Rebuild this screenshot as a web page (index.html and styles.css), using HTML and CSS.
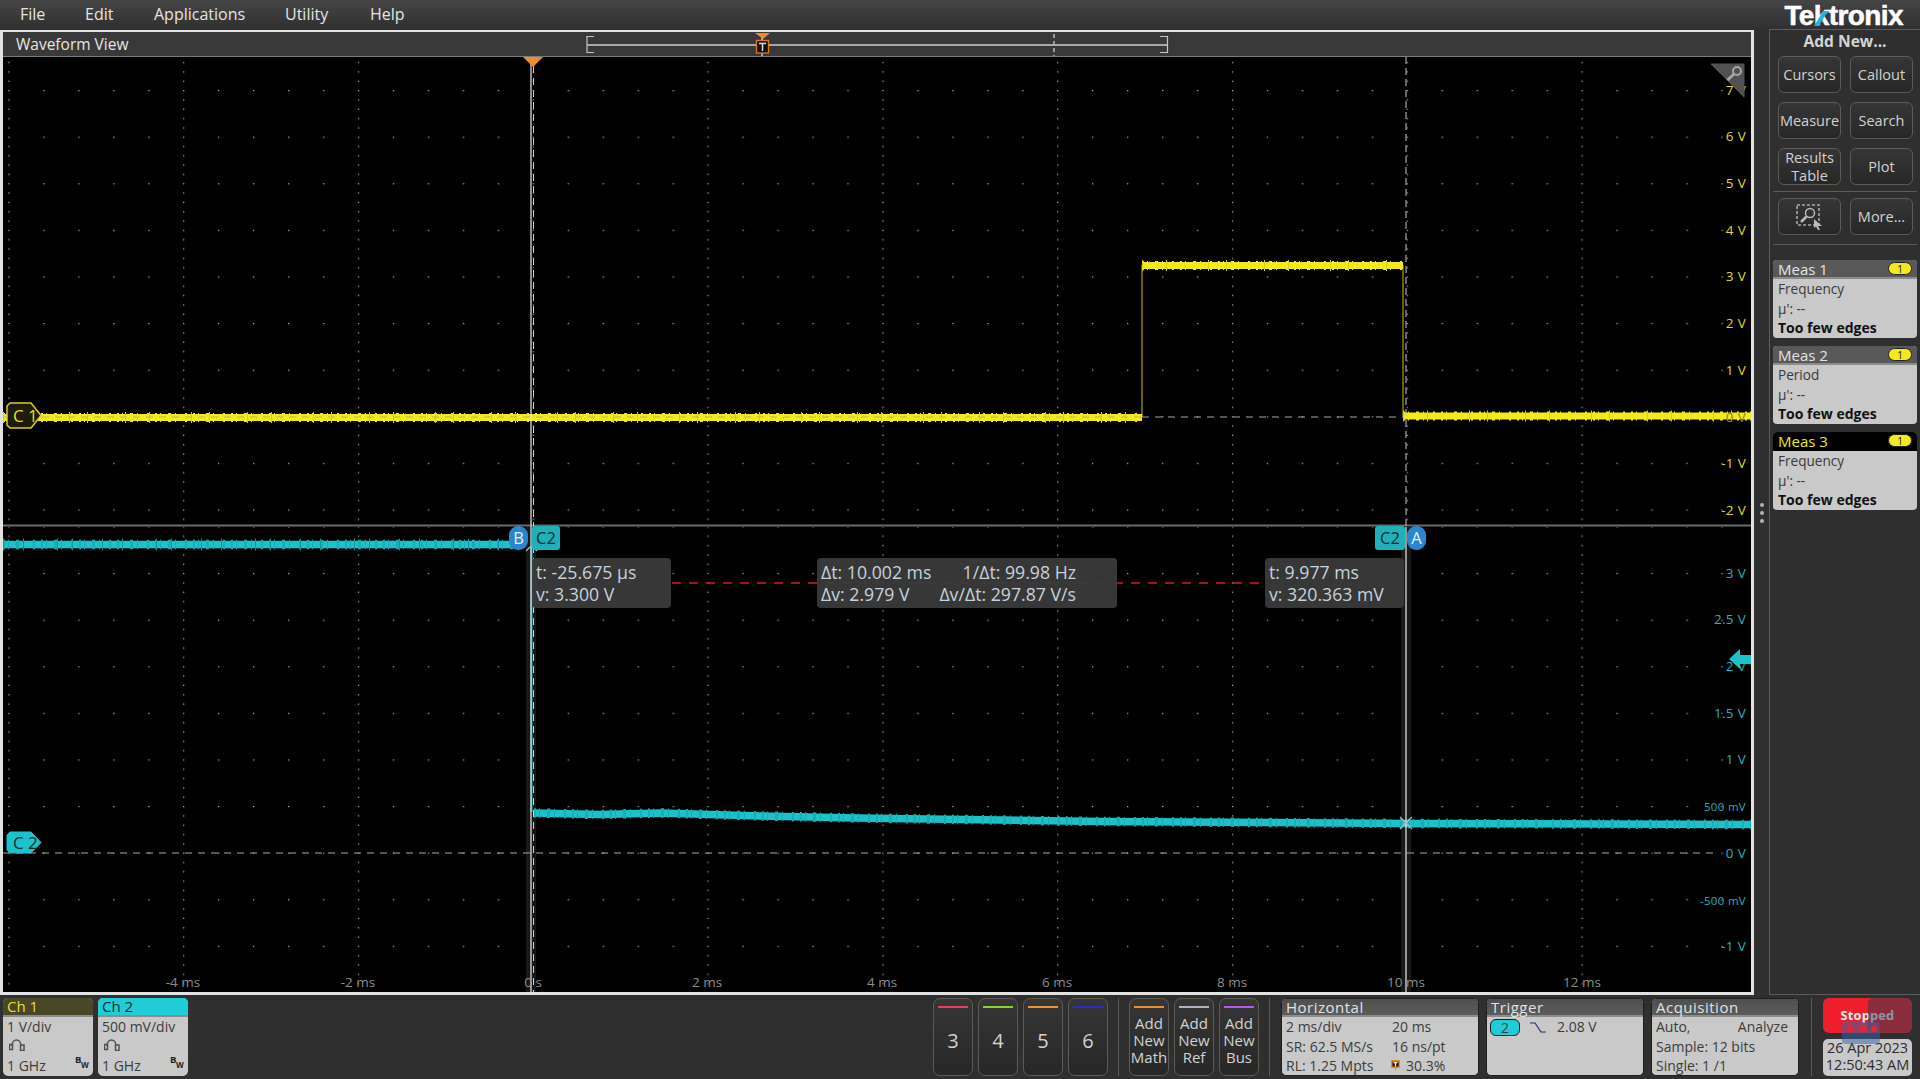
FILE: index.html
```html
<!DOCTYPE html>
<html lang="en">
<head>
<meta charset="utf-8">
<title>Waveform View</title>
<link rel="stylesheet" href="styles.css">
</head>
<body>
<div class="app">
  <header class="menubar">
    <nav class="menu">
      <span class="m-file">File</span><span class="m-edit">Edit</span><span class="m-apps">Applications</span><span class="m-util">Utility</span><span>Help</span>
    </nav>
    <div class="logo">Tektronix<svg class="logo-k" viewBox="0 0 16 16"><polygon points="0,16 5,16 15,0 10,0"/></svg></div>
  </header>

  <main class="main">
    <section class="wave">
      <div class="wave-head">
        <span class="wave-title">Waveform View</span>
        <svg class="overview" viewBox="580 32 600 24">
          <path class="ov-line" d="M587 45H1167"/>
          <path class="ov-br" d="M594 36.5H587V52.5H594M1160 36.5H1167.5V52.5H1160"/>
          <path class="ov-dash" d="M1054 34V56"/>
          <path class="ov-line" d="M762 38V56"/>
          <polygon class="ov-tri" points="755,33 770,33 763,39"/>
          <rect class="ov-box" x="756.5" y="40.5" width="12" height="12.5"/>
          <path class="ov-t" d="M759 43.5H766M762.5 43.5V51"/>
        </svg>
      </div>
      <div class="plot">
        <svg class="scope" viewBox="3 57 1748 935">
          <defs>
            <pattern id="gridA" x="8.3" y="43.4" width="174.8" height="46.6" patternUnits="userSpaceOnUse">
              <rect class="dot" x="0" y="0" width="1.2" height="1.2"/><rect class="dot" x="35" y="0" width="1.2" height="1.2"/><rect class="dot" x="70" y="0" width="1.2" height="1.2"/><rect class="dot" x="105" y="0" width="1.2" height="1.2"/><rect class="dot" x="140" y="0" width="1.2" height="1.2"/>
              <rect class="dot" x="0" y="9.3" width="1.2" height="1.2"/><rect class="dot" x="0" y="18.6" width="1.2" height="1.2"/><rect class="dot" x="0" y="28" width="1.2" height="1.2"/><rect class="dot" x="0" y="37.3" width="1.2" height="1.2"/>
            </pattern>
            <pattern id="gridB" x="8.3" y="526.4" width="174.8" height="46.6" patternUnits="userSpaceOnUse">
              <rect class="dot" x="0" y="0" width="1.2" height="1.2"/><rect class="dot" x="35" y="0" width="1.2" height="1.2"/><rect class="dot" x="70" y="0" width="1.2" height="1.2"/><rect class="dot" x="105" y="0" width="1.2" height="1.2"/><rect class="dot" x="140" y="0" width="1.2" height="1.2"/>
              <rect class="dot" x="0" y="9.3" width="1.2" height="1.2"/><rect class="dot" x="0" y="18.6" width="1.2" height="1.2"/><rect class="dot" x="0" y="28" width="1.2" height="1.2"/><rect class="dot" x="0" y="37.3" width="1.2" height="1.2"/>
            </pattern>
          </defs>
          <rect x="3" y="57" width="1748" height="468" fill="url(#gridA)"/>
          <rect x="3" y="527" width="1748" height="465" fill="url(#gridB)"/>

          <rect class="band" x="526" y="527" width="10" height="465"/>
          <rect class="band" x="1401" y="527" width="10" height="465"/>

          <!-- zero reference lines -->
          <path class="zero" d="M1142 417H1403"/>
          <path class="zero" d="M3 853H1715"/>

          <!-- channel 1 -->
          <path class="y-edge" d="M1142 417V265M1403 265V416"/>
          <path class="y-main" d="M3 417.5H1142M1142 265.500H1403M1403 416H1751"/>
          <path class="y-fuzz1" d="M3 417.5H1142M1142 265.500H1403M1403 416H1751"/>
          <path class="y-fuzz2" d="M3 417.5H1142M1142 265.500H1403M1403 416H1751"/>
          <path class="zero zero-over" d="M3 417H1142"/>

          <!-- channel 2 -->
          <path class="c-edge" d="M531.500 546V812"/>
          <path class="c-main" d="M3 544.5H520"/>
          <path class="c-fuzz1" d="M3 544.5H520"/>
          <path class="c-fuzz2" d="M3 544.5H520"/>
          <path class="c-main" d="M534 813L600 814.5L661 813L760 816L857 818L1102 821.5L1406 823.500L1751 824.500"/>
          <path class="c-fuzz1" d="M534 813L600 814.5L661 813L760 816L857 818L1102 821.5L1406 823.500L1751 824.500"/>

          <!-- pane separator -->
          <path class="sep" d="M3 525.5H1751"/>

          <!-- measurement line -->
          <path class="deltaline" d="M672 583H1264"/>

          <!-- cursors -->
          <path class="trig-dash" d="M533.5 66V992"/>
          <path class="cursor" d="M531 57V992M1406 527V992"/>
          <path class="cursor-top" d="M1406 57V527"/>
          <path class="cross" d="M1400 817L1412 829M1412 817L1400 829"/>
          <path class="cross" d="M526 551L530 547M537 551L533 547"/>
          <polygon class="trig-mark" points="523,57 543,57 533,67"/>

          <!-- vertical scale -->
          <g class="vy">
            <text x="1746" y="95">7 V</text><text x="1746" y="141">6 V</text><text x="1746" y="188">5 V</text><text x="1746" y="235">4 V</text><text x="1746" y="281">3 V</text><text x="1746" y="328">2 V</text><text x="1746" y="375">1 V</text><text class="on-trace" x="1746" y="422">0 V</text><text x="1746" y="468">-1 V</text><text x="1746" y="515">-2 V</text>
          </g>
          <g class="vc">
            <text x="1746" y="578">3 V</text><text x="1746" y="624">2.5 V</text><text x="1746" y="671">2 V</text><text x="1746" y="718">1.5 V</text><text x="1746" y="764">1 V</text><text class="small" x="1746" y="811">500 mV</text><text x="1746" y="858">0 V</text><text class="small" x="1746" y="905">-500 mV</text><text x="1746" y="951">-1 V</text>
          </g>
          <!-- time scale -->
          <g class="vt">
            <text x="183" y="987">-4 ms</text><text x="358" y="987">-2 ms</text><text x="533" y="987">0 s</text><text x="707" y="987">2 ms</text><text x="882" y="987">4 ms</text><text x="1057" y="987">6 ms</text><text x="1232" y="987">8 ms</text><text x="1406" y="987">10 ms</text><text x="1582" y="987">12 ms</text>
          </g>

          <!-- zoom corner -->
          <polygon class="zoom-tri" points="1711,64 1744,64 1744,97"/>
          <circle class="zoom-glass" cx="1737" cy="71" r="4"/>
          <path class="zoom-handle" d="M1734 74L1727.5 80"/>

          <!-- trigger level -->
          <polygon class="lvl" points="1729,659 1740,649 1740,655 1751,655 1751,664 1740,664 1740,669"/>

          <!-- channel markers -->
          <polygon class="mk1" points="10,403 31,403 41,415.5 31,428 10,428 7,425 7,406"/>
          <polygon class="mk2" points="10,832 31,832 41,842.5 31,853 10,853 7,850 7,835"/>
          <text class="mk1t" x="13" y="421.500">C 1</text>
          <text class="mk2t" x="13" y="848.500">C 2</text>
        </svg>

        <div class="tag tag-b">B</div>
        <div class="tag tag-c1">C2</div>
        <div class="tag tag-c2">C2</div>
        <div class="tag tag-a">A</div>

        <div class="readout r-left"><div>t: -25.675 µs</div><div>v: 3.300 V</div></div>
        <div class="readout r-mid">
          <div class="r-row"><span>Δt: 10.002 ms</span><span>1/Δt: 99.98 Hz</span></div>
          <div class="r-row"><span>Δv: 2.979 V</span><span>Δv/Δt: 297.87 V/s</span></div>
        </div>
        <div class="readout r-right"><div>t: 9.977 ms</div><div>v: 320.363 mV</div></div>
      </div>
    </section>

    <div class="gutter"><i></i><i></i><i></i></div>

    <aside class="side">
      <div class="side-title">Add New...</div>
      <div class="btn-grid">
        <div class="btn">Cursors</div><div class="btn">Callout</div>
        <div class="btn">Measure</div><div class="btn">Search</div>
        <div class="btn btn-two">Results<br>Table</div><div class="btn">Plot</div>
      </div>
      <hr class="rule rule-a">
      <div class="btn-grid">
        <div class="btn">
          <svg class="zoom-ico" viewBox="0 0 28 26">
            <rect class="zi-box" x="1" y="1" width="22" height="20"/>
            <circle class="zi-glass" cx="14" cy="9" r="4.5"/>
            <path class="zi-handle" d="M10.5 12.5L5 18"/>
            <polygon class="zi-arrow" points="18,15 26,22 22,22 24,26 22,26 20,22.500 18,24"/>
          </svg>
        </div>
        <div class="btn">More...</div>
      </div>
      <hr class="rule rule-b">
      <div class="meas-list">
        <div class="meas">
          <div class="meas-head"><span>Meas 1</span><b class="pill">1</b></div>
          <div class="meas-row">Frequency</div><div class="meas-row">µ': --</div><div class="meas-row strong">Too few edges</div>
        </div>
        <div class="meas">
          <div class="meas-head"><span>Meas 2</span><b class="pill">1</b></div>
          <div class="meas-row">Period</div><div class="meas-row">µ': --</div><div class="meas-row strong">Too few edges</div>
        </div>
        <div class="meas">
          <div class="meas-head active"><span>Meas 3</span><b class="pill">1</b></div>
          <div class="meas-row">Frequency</div><div class="meas-row">µ': --</div><div class="meas-row strong">Too few edges</div>
        </div>
      </div>
    </aside>
  </main>

  <footer class="foot">
    <div class="chip ch">
      <div class="chip-head ch1">Ch 1</div>
      <div class="row">1 V/div</div>
      <div class="row row-ico"><svg class="probe" viewBox="0 0 16 12"><path d="M3 7C3 -1 12 -1 12 7"/><rect x="0.500" y="5.500" width="3" height="5"/><rect x="11.500" y="6" width="3.500" height="5.500"/></svg></div>
      <div class="row row-bw"><span>1 GHz</span><span class="bw"><b>B</b><b class="w">W</b></span></div>
    </div>
    <div class="chip ch">
      <div class="chip-head ch2">Ch 2</div>
      <div class="row">500 mV/div</div>
      <div class="row row-ico"><svg class="probe" viewBox="0 0 16 12"><path d="M3 7C3 -1 12 -1 12 7"/><rect x="0.500" y="5.500" width="3" height="5"/><rect x="11.500" y="6" width="3.500" height="5.500"/></svg></div>
      <div class="row row-bw"><span>1 GHz</span><span class="bw"><b>B</b><b class="w">W</b></span></div>
    </div>

    <div class="foot-right">
      <div class="fbtn num c3">3</div><div class="fbtn num c4">4</div><div class="fbtn num c5">5</div><div class="fbtn num c6">6</div>
      <span class="vrule"></span>
      <div class="fbtn add cm">Add<br>New<br>Math</div><div class="fbtn add cr">Add<br>New<br>Ref</div><div class="fbtn add cb">Add<br>New<br>Bus</div>
      <span class="vrule"></span>
      <div class="chip boxed hz">
        <div class="chip-head dark">Horizontal</div>
        <div class="row two"><span>2 ms/div</span><span>20 ms</span></div>
        <div class="row two"><span>SR: 62.5 MS/s</span><span>16 ns/pt</span></div>
        <div class="row two"><span>RL: 1.25 Mpts</span><span class="pct"><svg class="t-ico" viewBox="0 0 9 11"><polygon points="0,0 9,0 9,8 5.500,8 4.500,11 3.500,8 0,8"/><rect class="t-in" x="1.500" y="1.500" width="6" height="5"/><path d="M2.500 2.500H6.500M4.500 2.500V6.500"/></svg>30.3%</span></div>
      </div>
      <div class="chip boxed tr">
        <div class="chip-head dark">Trigger</div>
        <div class="row trig"><span class="trig-pill">2</span><svg class="slope" viewBox="0 0 16 11"><path d="M0 1H5L11 10H16"/></svg><span>2.08 V</span></div>
      </div>
      <div class="chip boxed acq">
        <div class="chip-head dark">Acquisition</div>
        <div class="row split"><span>Auto,</span><span>Analyze</span></div>
        <div class="row">Sample: 12 bits</div>
        <div class="row">Single: 1 /1</div>
      </div>
      <span class="vrule vrule-last"></span>
      <div class="status">
        <div class="stopped">Stopped</div>
        <div class="clock">26 Apr 2023<br>12:50:43 AM</div>
        <svg class="mark" viewBox="0 0 89 78">
          <rect class="mark-a" x="45" y="0" width="44" height="35" rx="5"/>
          <rect class="mark-b" x="19" y="24" width="38" height="22" rx="4"/>
          <circle class="mark-d" cx="27" cy="31" r="3.500"/><circle class="mark-d" cx="40" cy="31" r="3.500"/><circle class="mark-d" cx="51" cy="31" r="3.500"/>
        </svg>
      </div>
    </div>
  </footer>
</div>
</body>
</html>
```
FILE: styles.css
```css
* { box-sizing: border-box; }
html, body { margin: 0; padding: 0; }
body {
  width: 1920px; height: 1079px; overflow: hidden;
  background: #2f2f2f;
  font-family: "Open Sans", "Noto Sans", sans-serif;
  color: #333;
}
.app { display: flex; flex-direction: column; width: 1920px; height: 1079px; }

/* top menu */
.menubar {
  position: relative; height: 29px; flex: none;
  display: flex; align-items: center; justify-content: space-between;
  background: linear-gradient(#454545, #303030);
  padding: 0 17px 0 20px;
}
.menu { display: flex; font-size: 16px; color: #e4e4e4; line-height: 22px; margin-top: -2px; }
.menu span { white-space: nowrap; }
.m-file { width: 65px; }
.m-edit { width: 69px; }
.m-apps { width: 131px; }
.m-util { width: 85px; }
.logo {
  position: relative;
  font-family: "Liberation Sans", Arial, sans-serif;
  font-weight: 700; font-size: 28px; letter-spacing: -0.6px;
  -webkit-text-stroke: 0.5px #fff;
  color: #fff; line-height: 29px; height: 29px; margin-top: 1px;
}
.logo-k { position: absolute; left: 30px; top: 10px; width: 15px; height: 15px; fill: #1cb5dc; }

/* main */
.main { flex: 1; display: flex; min-height: 0; height: 966px; }
.wave {
  width: 1754px; margin-top: 1px;
  border: 3px solid #e2e2e2; border-top-width: 2px;
  display: flex; flex-direction: column; background: #000;
}
.wave-head {
  position: relative; height: 25px; flex: none;
  background: #393939; border-bottom: 1px solid #7a7a7a;
  padding-left: 13px; line-height: 25px; font-size: 15.5px; color: #e6e6e6;
}
.overview { position: absolute; left: 577px; top: 0; width: 600px; height: 24px; }
.ov-line { stroke: #a8a8a8; stroke-width: 2; fill: none; }
.ov-br { stroke: #c4c4c4; stroke-width: 1.2; fill: none; }
.ov-dash { stroke: #b4b4b4; stroke-width: 1.6; stroke-dasharray: 4 3; fill: none; }
.ov-tri { fill: #f08c28; }
.ov-box { fill: #111; stroke: #d87a20; stroke-width: 1.3; }
.ov-t { stroke: #d8d8d8; stroke-width: 1.5; fill: none; }

.plot { position: relative; flex: 1; background: #000; }
.scope { position: absolute; left: 0; top: 0; width: 1748px; height: 935px; display: block; }
.dot { fill: #b8b8b8; }
.band { fill: #181818; }
.zero { stroke: #a8a8a8; stroke-width: 1; stroke-dasharray: 7 6; fill: none; }
.zero-over { stroke: #b8b468; }
.sep { stroke: #6a6a6a; stroke-width: 2; fill: none; }
.y-edge { stroke: #9c9410; stroke-width: 1.3; fill: none; }
.y-main { stroke: #f2ea1a; stroke-width: 7; fill: none; }
.y-fuzz1 { stroke: #f2ea1a; stroke-width: 9; fill: none; stroke-dasharray: 2 3 1 7 3 4 1 9 2 6; }
.y-fuzz2 { stroke: #d8d014; stroke-width: 11; fill: none; stroke-dasharray: 1 23 1 41 1 17 1 37; }
.c-edge { stroke: #149aa2; stroke-width: 2; fill: none; }
.c-main { stroke: #1cc2ca; stroke-width: 7.5; fill: none; }
.c-fuzz1 { stroke: #18aeb6; stroke-width: 9.5; fill: none; stroke-dasharray: 2 3 1 7 3 4 1 9 2 6; }
.c-fuzz2 { stroke: #14929a; stroke-width: 12; fill: none; stroke-dasharray: 1 19 1 33 1 14 1 29; }
.deltaline { stroke: #d81c1c; stroke-width: 1.6; stroke-dasharray: 9 8; fill: none; }
.trig-dash { stroke: #cfcfcf; stroke-width: 1; stroke-dasharray: 7 5; fill: none; }
.cursor { stroke: #ececec; stroke-width: 1.2; fill: none; }
.cursor-top { stroke: #c8c8c8; stroke-width: 1; stroke-dasharray: 7 4; fill: none; }
.cross { stroke: #b8b8b8; stroke-width: 1.2; fill: none; }
.trig-mark { fill: #f08c28; }

.vy text, .vc text, .vt text { font-size: 13.5px; font-family: "Open Sans", sans-serif; }
.vy text { fill: #e2da20; text-anchor: end; letter-spacing: 0.3px; }
.vy .on-trace { fill: #8a8410; }
.vc text { fill: #22b4bc; text-anchor: end; letter-spacing: 0.3px; }
.vc .small { font-size: 11.5px; }
.vt text { fill: #8e8e8e; text-anchor: middle; }

.zoom-tri { fill: #515151; stroke: #515151; stroke-width: 1; stroke-linejoin: round; }
.zoom-glass { fill: none; stroke: #a6a6a6; stroke-width: 2; }
.zoom-handle { stroke: #a6a6a6; stroke-width: 3; fill: none; }
.lvl { fill: #1cc2ca; }
.mk1 { fill: #1d1c08; stroke: #d8d020; stroke-width: 1.5; stroke-linejoin: round; }
.mk2 { fill: #1cc2ca; stroke: #1cc2ca; stroke-width: 1; stroke-linejoin: round; }
.mk1t { fill: #e6de24; font-size: 17px; font-family: "Open Sans", sans-serif; }
.mk2t { fill: #0d2d30; font-size: 17px; font-family: "Open Sans", sans-serif; }

.tag {
  position: absolute; height: 24px; line-height: 23px; text-align: center;
  font-size: 16.5px;
}
.tag-b { left: 506px; top: 469px; width: 19px; background: #2a87cf; color: #e6f2fa; border-radius: 9px; }
.tag-a { left: 1404px; top: 469px; width: 19px; background: #2a87cf; color: #e6f2fa; border-radius: 9px; }
.tag-c1 { left: 529px; top: 469px; width: 28px; background: #1fb0b8; color: #062a2e; border-radius: 3px; }
.tag-c2 { left: 1372px; top: 469px; width: 30px; background: #1fb0b8; color: #062a2e; border-radius: 3px; }

.readout {
  position: absolute; top: 501px; height: 50px; padding: 4px 4px;
  background: rgba(58, 58, 58, 0.95); border-radius: 4px;
  color: #c6d2dc; font-size: 17.7px; line-height: 21.5px; white-space: nowrap;
}
.r-left { left: 529px; width: 139px; }
.r-mid { left: 814px; width: 300px; }
.r-right { left: 1262px; width: 139px; }
.r-row { display: flex; justify-content: space-between; padding-right: 37px; }

/* gutter */
.gutter {
  width: 15px; flex: none; display: flex; flex-direction: column;
  align-items: center; justify-content: center; gap: 4px; padding-top: 2px;
}
.gutter i { width: 4px; height: 4px; border-radius: 50%; background: #b4b4b4; }

/* side */
.side {
  width: 151px; flex: none; border: 1px solid #5c5c5c; border-right: 0;
  padding-left: 8px;
}
.side-title {
  height: 26px; line-height: 22px; text-align: center;
  font-size: 15.6px; font-weight: 700; color: #d4d4d4; padding-right: 8px;
}
.btn-grid { display: grid; grid-template-columns: 63px 63px; grid-auto-rows: 37px; gap: 9px; }
.btn, .fbtn {
  display: flex; align-items: center; justify-content: center; text-align: center;
  background: linear-gradient(#363636, #272727);
  border: 1px solid #5e5a55; border-radius: 6px;
  color: #d2d2d2; font-size: 14.5px;
}
.btn-two { line-height: 18px; }
.rule { border: 0; height: 1px; background: #5c5c5c; margin: 0 3px 0 -5px; width: 144px; }
.rule-a { margin-top: 6px; margin-bottom: 6px; }
.rule-b { margin-top: 9px; margin-bottom: 15px; }
.zoom-ico { width: 28px; height: 26px; }
.zi-box { fill: none; stroke: #a8a8a8; stroke-width: 1.6; stroke-dasharray: 3 2; }
.zi-glass { fill: none; stroke: #b8b8b8; stroke-width: 1.5; }
.zi-handle { stroke: #b8b8b8; stroke-width: 2.6; fill: none; }
.zi-arrow { fill: #b8b8b8; }

.meas-list { display: flex; flex-direction: column; gap: 8px; margin-left: -5px; width: 144px; }
.meas { height: 78px; background: #c9c9c9; border-radius: 4px; font-size: 13.6px; color: #3a3a3a; }
.meas-head {
  height: 19px; display: flex; align-items: center; justify-content: space-between;
  background: #595959; border-bottom: 2px solid #8c8c8c; color: #e4e4e4;
  padding: 0 5px 0 5px; font-size: 15px; border-radius: 4px 4px 0 0;
}
.meas-head.active { background: #000; color: #efe61c; border-bottom-color: #000; }
.pill {
  width: 24px; height: 13px; line-height: 12px; border-radius: 7px; text-align: center;
  background: #f4e81e; border: 1px solid #222; color: #222; font-size: 10px; font-weight: 400;
}
.meas-row { height: 19.5px; line-height: 19.5px; padding-left: 5px; }
.meas-row.strong { font-weight: 700; color: #111; font-size: 14px; }

/* footer */
.foot {
  height: 84px; flex: none; display: flex; align-items: flex-start;
  padding: 3px 8px 0 3px; gap: 5px;
}
.chip { height: 78px; background: #c9c9c9; border-radius: 5px; color: #3c3c3c; font-size: 14px; flex: none; }
.ch { width: 90px; }
.chip-head {
  height: 19px; line-height: 17px; padding-left: 4px; font-size: 15px;
  border-bottom: 2px solid #8c8c8c; border-radius: 5px 5px 0 0;
}
.boxed { border: 1px solid #1e1e1e; }
.boxed .chip-head { height: 18px; line-height: 16px; padding-left: 4px; border-radius: 4px 4px 0 0; }
.ch1 { background: #4a4628; color: #e8df2c; }
.ch2 { background: #1fcdd6; color: #10282c; }
.dark { background: linear-gradient(#4e4e4e, #5c5c5c); color: #e2e2e2; letter-spacing: 0.5px; }
.row { height: 19.5px; line-height: 19.5px; padding: 0 4px; white-space: nowrap; }
.row-ico { display: flex; align-items: center; padding-left: 6px; padding-bottom: 3px; }
.row-bw { display: flex; justify-content: space-between; padding-right: 6px; }
.probe { width: 16px; height: 12px; fill: none; stroke: #505050; stroke-width: 1.5; }
.bw { position: relative; width: 12px; height: 16px; font-size: 9.5px; color: #222; }
.bw b { position: absolute; left: 0; top: -6px; }
.bw b.w { left: 6px; top: -1px; font-size: 8px; }

.foot-right { margin-left: auto; display: flex; align-items: flex-start; }
.fbtn { width: 40px; height: 78px; position: relative; margin-right: 5px; border-radius: 7px; }
.fbtn::before {
  content: ""; position: absolute; left: 4px; right: 4px; top: 7px; height: 2px;
}
.num { font-size: 20px; padding-top: 7px; }
.add { font-size: 15px; line-height: 17px; padding-top: 7px; }
.c3::before { background: #e8405c; }
.c4::before { background: #8cd030; }
.c5::before { background: #f09430; }
.c6::before { background: #2c2cc8; }
.cm::before { background: #ea8c2c; }
.cr::before { background: #b0b4c0; }
.cb::before { background: #b858ea; }
.vrule { width: 1px; height: 78px; background: #5a5a5a; margin: 0 10px 0 5px; flex: none; }
.vrule-last { margin: 0 11px 0 12px; }
.vrule + .chip { margin-left: 1px; }
.hz { width: 198px; margin-right: 7px; }
.tr { width: 158px; margin-right: 7px; }
.acq { width: 148px; }
.two { display: flex; }
.two span:first-child { width: 106px; }
.pct { position: relative; padding-left: 14px; }
.t-ico { position: absolute; left: -1px; top: 4px; width: 9px; height: 11px; }
.t-ico polygon { fill: #e68a26; }
.t-in { fill: #111; }
.t-ico path { stroke: #fff; stroke-width: 1.4; fill: none; }
.trig { display: flex; align-items: center; height: 20px; }
.trig-pill {
  width: 30px; height: 17px; line-height: 15px; text-align: center;
  background: #1fcdd6; border: 1px solid #1a1a1a; border-radius: 6px; margin-left: -1px;
}
.slope { width: 16px; height: 11px; margin: 0 11px 0 10px; fill: none; stroke: #2a2a70; stroke-width: 1.2; }
.split { display: flex; justify-content: space-between; padding-right: 10px; }

.status { position: relative; width: 89px; height: 78px; display: flex; flex-direction: column; gap: 6px; }
.stopped {
  height: 35px; line-height: 34px; text-align: center; border-radius: 6px;
  background: #f01e2c; color: #eee; font-weight: 700; font-size: 12.8px; letter-spacing: 0.2px;
}
.clock {
  height: 37px; background: #c9c9c9; border-radius: 5px; color: #2e2e2e;
  font-size: 14.5px; line-height: 16.5px; text-align: center; padding-top: 1px; white-space: nowrap;
}
.mark { position: absolute; left: 0; top: 0; width: 89px; height: 78px; pointer-events: none; }
.mark-a { fill: rgba(40, 60, 80, 0.5); }
.mark-b { fill: rgba(50, 100, 170, 0.5); }
.mark-d { fill: #e02838; }
```
